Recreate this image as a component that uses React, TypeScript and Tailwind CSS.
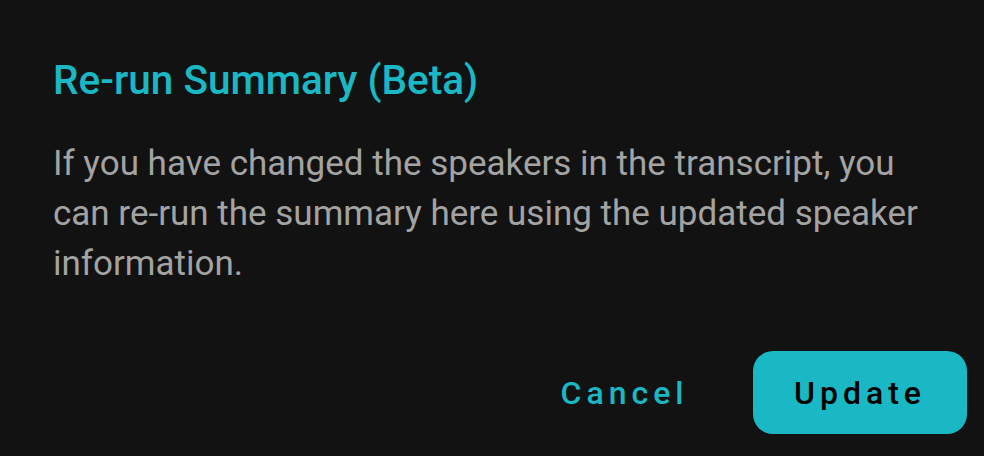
import React from "react";

function RerunSummaryDialog() {
  return (
    <div className="w-[984px] h-[456px] bg-[#121212] flex flex-col font-['Roboto',_sans-serif] overflow-hidden">
      <h2 className="pt-[56px] pl-[53px] text-[40.5px] leading-[48px] font-medium text-[#1ab8c4]">
        Re-run Summary (Beta)
      </h2>
      <p className="mt-[35px] pl-[53px] pr-[60px] text-[35px] leading-[50px] text-[#a3a3a3]">
        If you have changed the speakers in the transcript, you can re-run the
        summary here using the updated speaker information.
      </p>
      <div className="mt-[62px] flex items-center justify-end gap-[48px] pr-[17px]">
        <button className="w-[161px] h-[83px] flex items-center justify-center text-[32px] font-medium tracking-[5px] text-[#1ab8c4]">
          Cancel
        </button>
        <button className="w-[214px] h-[83px] flex items-center justify-center rounded-[20px] bg-[#1ab8c4] text-[32px] font-medium tracking-[5px] text-black">
          Update
        </button>
      </div>
    </div>
  );
}

export default function App() {
  return <RerunSummaryDialog />;
}
